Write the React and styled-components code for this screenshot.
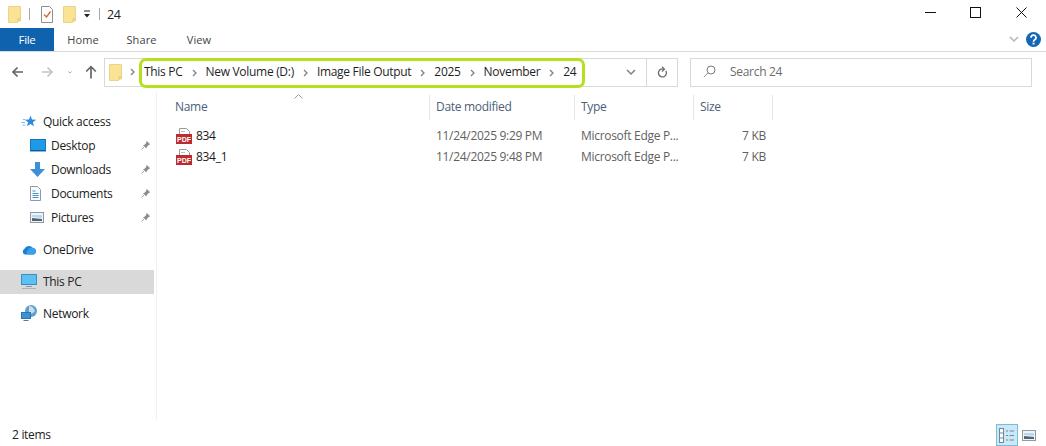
import React from 'react'
import styled, { createGlobalStyle } from 'styled-components'

const GlobalStyle = createGlobalStyle`
  html, body { margin: 0; padding: 0; background: #fff; }
  body {
    font-family: "Open Sans", "Noto Sans", "Liberation Sans", sans-serif;
    font-size: 12px;
    color: #1a1a1a;
    overflow: hidden;
  }
`

const Window = styled.div`
  width: 1046px;
  height: 446px;
  display: flex;
  flex-direction: column;
  letter-spacing: -0.3px;
`

const TitleBar = styled.div`
  height: 28px;
  display: flex;
  align-items: center;
  padding: 0 2px 0 8px;
`

const QuickTools = styled.div`
  display: flex;
  align-items: center;
  flex: 1;
`

const ToolSlot = styled.span`
  display: inline-flex;
  margin-left: ${(p) => p.$left || 0}px;
`

const TitleDivider = styled.span`
  width: 1px;
  height: 12px;
  background: #a8a8a8;
  margin-left: 8px;
`

const TitleText = styled.span`
  font-size: 12.5px;
  color: #222;
  margin-left: 7px;
`

const WinButton = styled.div`
  width: 45.5px;
  height: 24px;
  display: flex;
  align-items: center;
  justify-content: center;
  margin-top: -4px;
`

const Ribbon = styled.div`
  height: 24px;
  display: flex;
  align-items: stretch;
  border-bottom: 1px solid #dadada;
  box-sizing: border-box;
  padding-right: 4px;
`

const FileTab = styled.div`
  width: 54px;
  background: #0f62ad;
  color: #fff;
  display: flex;
  align-items: center;
  justify-content: center;
  font-size: 11.5px;
`

const RibbonTab = styled.div`
  width: ${(p) => p.$w}px;
  display: flex;
  align-items: center;
  justify-content: center;
  font-size: 11px;
  letter-spacing: 0.1px;
  color: #444;
`

const RibbonEnd = styled.div`
  margin-left: auto;
  display: flex;
  align-items: center;
  gap: 7px;
  padding-right: 1px;
`

const AddressRow = styled.div`
  height: 40px;
  display: flex;
  align-items: center;
  box-sizing: border-box;
  padding: 0 14px 0 8px;
`

const NavButton = styled.div`
  width: ${(p) => p.$w}px;
  margin-left: ${(p) => p.$left || 0}px;
  display: flex;
  justify-content: center;
  align-items: center;
`

const AddressBar = styled.div`
  position: relative;
  margin-left: 4px;
  width: 574px;
  height: 29px;
  box-sizing: border-box;
  border: 1px solid #d9d9d9;
  display: flex;
  align-items: center;
  padding-left: 4px;
  gap: 8px;
`

const Crumbs = styled.div`
  position: absolute;
  left: 34px;
  top: -1px;
  width: 446px;
  height: 30px;
  box-sizing: border-box;
  border: 3px solid #b4e01c;
  border-radius: 7px;
  display: flex;
  align-items: center;
  padding: 0 0 2px 2px;
  color: #1f1f1f;
  white-space: nowrap;
`

const CrumbArrow = styled.span`
  display: inline-flex;
  margin: 2px 9px 0;
`

const AddressEnd = styled.div`
  margin-left: auto;
  display: flex;
  align-items: stretch;
  height: 100%;
`

const AddressBtn = styled.div`
  width: ${(p) => p.$w}px;
  display: flex;
  align-items: center;
  justify-content: center;
  ${(p) => p.$divided && 'border-left: 1px solid #d9d9d9;'}
`

const SearchBox = styled.div`
  margin-left: 12px;
  width: 342px;
  height: 29px;
  box-sizing: border-box;
  border: 1px solid #d9d9d9;
  display: flex;
  align-items: center;
  padding: 0 0 2px 12px;
  gap: 14px;
  color: #6d6d6d;
`

const Body = styled.div`
  flex: 1;
  display: flex;
  min-height: 0;
`

const Sidebar = styled.nav`
  width: 157px;
  box-sizing: border-box;
  border-right: 1px solid #f0f0f0;
  padding-top: 18px;
  flex-shrink: 0;
`

const NavGroup = styled.div`
  margin-bottom: 8px;
`

const NavRow = styled.div`
  height: 24px;
  width: 154px;
  display: flex;
  align-items: center;
  box-sizing: border-box;
  padding-left: ${(p) => (p.$child ? 30 : 21)}px;
  padding-bottom: 2px;
  background: ${(p) => (p.$active ? '#d9d9d9' : 'transparent')};
  color: #222;
`

const NavIcon = styled.span`
  width: ${(p) => (p.$child ? 21 : 22)}px;
  display: inline-flex;
  align-items: center;
`

const PinWrap = styled.span`
  margin-left: auto;
  margin-right: 3px;
  display: inline-flex;
`

const Main = styled.main`
  flex: 1;
  min-width: 0;
`

const Columns = styled.div`
  display: grid;
  grid-template-columns: 272px 145px 119px 80px;
`

const HeaderRow = styled(Columns)`
  height: 25px;
  margin-top: 3px;
  margin-bottom: 5px;
`

const HeaderCell = styled.div`
  position: relative;
  display: flex;
  align-items: center;
  box-sizing: border-box;
  padding-left: ${(p) => (p.$first ? 18 : 6)}px;
  padding-bottom: 2px;
  color: #4c607a;
  ${(p) => !p.$first && 'border-left: 1px solid #e5e5e5;'}
  ${(p) => p.$last && 'border-right: 1px solid #e5e5e5;'}
`

const SortMark = styled.span`
  position: absolute;
  left: 137px;
  top: -1px;
  display: inline-flex;
`

const FileRow = styled(Columns)`
  height: 21px;
`

const FileCell = styled.div`
  display: flex;
  align-items: center;
  padding-left: ${(p) => (p.$first ? 19 : 7)}px;
  padding-right: ${(p) => (p.$right ? 7 : 0)}px;
  justify-content: ${(p) => (p.$right ? 'flex-end' : 'flex-start')};
  color: ${(p) => (p.$first ? '#1a1a1a' : '#5f5f5f')};
  gap: 4px;
`

const StatusBar = styled.footer`
  height: 26px;
  display: flex;
  align-items: center;
  padding: 0 10px 0 12px;
  justify-content: space-between;
  color: #222;
`

const StatusText = styled.span`
  margin-top: 2px;
`

const ViewToggles = styled.div`
  display: flex;
  align-items: center;
  gap: 4px;
`

const ViewButton = styled.div`
  width: ${(p) => (p.$active ? 22 : 14)}px;
  height: 22px;
  margin-top: 4px;
  box-sizing: border-box;
  display: flex;
  align-items: center;
  justify-content: center;
  ${(p) => p.$active && 'background: #cce8f6; border: 1px solid #79bcdb;'}
`

const PdfLabel = styled.text`
  font-family: "Liberation Sans", sans-serif;
  font-size: 7px;
  font-weight: 700;
  letter-spacing: 0;
  fill: #fff;
`

const Svg = ({ w, h, children }) => (
  <svg width={w} height={h} viewBox={`0 0 ${w} ${h}`} fill="none">{children}</svg>
)

const FolderIcon = () => (
  <Svg w={13} h={17}>
    <path d="M.5.5h12v14.500h-3v1.500H.5z" fill="#fbe396" stroke="#ecd38a" />
    <path d="M9.500 12v4.500L12.500 13V12z" fill="#eccf7a" />
  </Svg>
)

const NotesIcon = () => (
  <Svg w={12} h={17}>
    <path d="M.5.5h8l3 3v13H.5z" fill="#fff" stroke="#8f8f8f" />
    <path d="M3 8.500l2.500 2.500L9.500 5.500" stroke="#d9622b" strokeWidth="1.300" />
  </Svg>
)

const QuickDropIcon = () => (
  <Svg w={8} h={9}>
    <path d="M1 1h6" stroke="#222" />
    <path d="M1 4h6L4 7.500z" fill="#222" />
  </Svg>
)

const MinimizeIcon = () => (
  <Svg w={11} h={11}><path d="M0 5.500h11" stroke="#111" /></Svg>
)

const MaximizeIcon = () => (
  <Svg w={11} h={11}><rect x=".5" y=".5" width="10" height="10" stroke="#111" /></Svg>
)

const CloseIcon = () => (
  <Svg w={11} h={11}><path d="M.5.500l10 10M10.500.500l-10 10" stroke="#111" /></Svg>
)

const ChevronRight = () => (
  <Svg w={5} h={8}>
    <path d="M1 1l3 3-3 3" stroke="#808080" strokeWidth="1.300" />
  </Svg>
)

const ChevronDown = ({ c = '#808080' }) => (
  <Svg w={10} h={7}>
    <path d="M1 1l4 4 4-4" stroke={c} strokeWidth="1.500" />
  </Svg>
)

const SmallDown = () => (
  <Svg w={7} h={5}>
    <path d="M.7.700l2.800 2.800L6.300.700" stroke="#8a8a8a" strokeWidth="1.300" />
  </Svg>
)

const SortUp = () => (
  <Svg w={9} h={5}>
    <path d="M.5 4.500l4-4 4 4" stroke="#9a9a9a" />
  </Svg>
)

const ArrowBack = () => (
  <Svg w={13} h={12}>
    <path d="M12 6H2M6.500 1.500L2 6l4.500 4.500" stroke="#666" strokeWidth="1.700" />
  </Svg>
)

const ArrowForward = () => (
  <Svg w={13} h={12}>
    <path d="M1 6h10M6.500 1.500L11 6l-4.500 4.500" stroke="#c4c4c4" strokeWidth="1.700" />
  </Svg>
)

const ArrowUp = () => (
  <Svg w={12} h={14}>
    <path d="M6 13.500V2M1.200 6.500L6 1.700l4.800 4.800" stroke="#666" strokeWidth="1.700" />
  </Svg>
)

const RefreshIcon = () => (
  <Svg w={11} h={13}>
    <path d="M8.800 4.800A4 4 0 1 1 4 3.200h3" stroke="#6a6a6a" strokeWidth="1.300" />
    <path d="M5 .8L7.500 3.200 5 5.600" stroke="#6a6a6a" strokeWidth="1.200" />
  </Svg>
)

const SearchIcon = () => (
  <Svg w={13} h={13}>
    <circle cx="8" cy="5" r="4" stroke="#7a7a7a" />
    <path d="M5 8L.8 12.200" stroke="#9a9a9a" />
  </Svg>
)

const StarIcon = () => (
  <Svg w={16} h={12}>
    <path d="M9.500.5L11 4.500l4.200.15-3.300 2.650L13 11.350 9.500 9 6 11.350l1.100-4.050L3.800 4.650 8 4.500z" fill="#2d8ae0" />
    <path d="M2 4.500h2M.5 7.500h3.500M1.500 10h3" stroke="#7dbbec" />
  </Svg>
)

const DesktopIcon = () => (
  <Svg w={16} h={13}>
    <rect x=".5" y=".5" width="15" height="11.500" fill="#1e9be8" stroke="#1277c0" />
    <path d="M1 11h14v1H1z" fill="#0c5a94" />
  </Svg>
)

const DownloadIcon = () => (
  <Svg w={15} h={15}>
    <path d="M5 0h5v7h5l-7.500 8L0 7h5z" fill="#3f8fd9" />
  </Svg>
)

const DocumentIcon = () => (
  <Svg w={11} h={15}>
    <path d="M.5.5h7l3 3v11H.5z" fill="#f7fbff" stroke="#8a9aa8" />
    <path d="M2.500 5h3M2.500 7.500h6M2.500 9.500h6M2.500 11.500h6" stroke="#4a8fc0" />
  </Svg>
)

const PictureIcon = () => (
  <Svg w={14} h={11}>
    <rect x=".5" y=".5" width="13" height="10" fill="#eef4f9" stroke="#8f9aa3" />
    <path d="M2 3h10v3L2 5z" fill="#b9d7ee" />
    <path d="M2 6l10 1v2H2z" fill="#55636e" />
  </Svg>
)

const PinIcon = () => (
  <Svg w={10} h={10}>
    <path d="M5.500.8l3.700 3.500-1.500.6-2 2-.4 1.500L2 5.200l1.600-.5 1.700-2z" fill="#8c8c8c" />
    <path d="M3 7L.6 9.400" stroke="#a5a5a5" />
  </Svg>
)

const CloudIcon = () => (
  <Svg w={16} h={11}>
    <path d="M4 10.500A3 3 0 0 1 3.300 5 5 5 0 0 1 12 4a3.400 3.400 0 0 1 1 6.500z" fill="#1c7fd4" />
    <path d="M7 10.500a2.500 2.500 0 0 1 0-4.500 3.500 3.500 0 0 1 5-2 3.400 3.400 0 0 1 1 6.500z" fill="#3aa0ea" />
  </Svg>
)

const MonitorIcon = () => (
  <Svg w={16} h={15}>
    <rect x=".5" y=".5" width="15" height="10" fill="#5cc0f2" stroke="#3a8fc0" />
    <path d="M5 12.500h6" stroke="#7f9db0" />
    <path d="M1 14.500h14" stroke="#a5b5c0" />
  </Svg>
)

const NetworkIcon = () => (
  <Svg w={16} h={16}>
    <circle cx="10" cy="6" r="6" fill="#5d9fcf" />
    <path d="M8 .5c2.500.5 5 2.500 6 5.500-1.500 2-3.500 3-6 3z" fill="#c9dde9" />
    <rect x=".5" y="7.500" width="9" height="6" fill="#3d92d2" stroke="#2877b5" />
    <path d="M2.500 15.500h5" stroke="#5e7686" />
  </Svg>
)

const PdfIcon = () => (
  <Svg w={16} h={16}>
    <path d="M3.500.5h7l3 3v4h-10z" fill="#fff" stroke="#9a9a9a" />
    <path d="M5 3.500h4" stroke="#bdbdbd" />
    <rect y="6" width="16" height="10" fill="#bd2a2f" />
    <PdfLabel x="8" y="13.500" textAnchor="middle">PDF</PdfLabel>
  </Svg>
)

const HelpIcon = () => (
  <Svg w={15} h={15}>
    <circle cx="7.500" cy="7.500" r="7.500" fill="#1367b5" />
    <path d="M5 5.700a2.500 2.500 0 1 1 3.700 2.100c-.8.500-1.200.8-1.200 1.900" stroke="#fff" strokeWidth="1.700" />
    <rect x="6.600" y="10.600" width="1.900" height="1.900" fill="#fff" />
  </Svg>
)

const DetailsIcon = () => (
  <Svg w={16} h={15}>
    <rect x=".5" y=".5" width="4" height="14" fill="#fff" stroke="#6d8a9c" />
    <path d="M1 5h3M1 10h3" stroke="#6d8a9c" />
    <path d="M7 3h2M10.500 3H15M7 7.500h2M10.500 7.500H15M7 12h2M10.500 12H15" stroke="#6d8a9c" />
  </Svg>
)

const crumbs = ['This PC', 'New Volume (D:)', 'Image File Output', '2025', 'November', '24']

const quickAccess = [
  { label: 'Desktop', icon: <DesktopIcon /> },
  { label: 'Downloads', icon: <DownloadIcon /> },
  { label: 'Documents', icon: <DocumentIcon /> },
  { label: 'Pictures', icon: <PictureIcon /> },
]

const files = [
  { name: '834', date: '11/24/2025 9:29 PM' },
  { name: '834_1', date: '11/24/2025 9:48 PM' },
]

export default function App() {
  return (
    <>
      <GlobalStyle />
      <Window>
        <TitleBar>
          <QuickTools>
            <FolderIcon />
            <TitleDivider />
            <ToolSlot $left={11}><NotesIcon /></ToolSlot>
            <ToolSlot $left={10}><FolderIcon /></ToolSlot>
            <ToolSlot $left={7}><QuickDropIcon /></ToolSlot>
            <TitleDivider />
            <TitleText>24</TitleText>
          </QuickTools>
          <WinButton><MinimizeIcon /></WinButton>
          <WinButton><MaximizeIcon /></WinButton>
          <WinButton><CloseIcon /></WinButton>
        </TitleBar>

        <Ribbon>
          <FileTab>File</FileTab>
          <RibbonTab $w={58}>Home</RibbonTab>
          <RibbonTab $w={59}>Share</RibbonTab>
          <RibbonTab $w={56}>View</RibbonTab>
          <RibbonEnd>
            <ChevronDown c="#b5b5b5" />
            <HelpIcon />
          </RibbonEnd>
        </Ribbon>

        <AddressRow>
          <NavButton $w={18}><ArrowBack /></NavButton>
          <NavButton $w={42}><ArrowForward /></NavButton>
          <NavButton $w={4}><SmallDown /></NavButton>
          <NavButton $w={18} $left={10}><ArrowUp /></NavButton>
          <AddressBar>
            <FolderIcon />
            <ChevronRight />
            <Crumbs>
              {crumbs.map((crumb, i) => (
                <React.Fragment key={crumb}>
                  {i > 0 && <CrumbArrow><ChevronRight /></CrumbArrow>}
                  <span>{crumb}</span>
                </React.Fragment>
              ))}
            </Crumbs>
            <AddressEnd>
              <AddressBtn $w={30}><ChevronDown /></AddressBtn>
              <AddressBtn $w={30} $divided><RefreshIcon /></AddressBtn>
            </AddressEnd>
          </AddressBar>
          <SearchBox>
            <SearchIcon />
            <span>Search 24</span>
          </SearchBox>
        </AddressRow>

        <Body>
          <Sidebar>
            <NavGroup>
              <NavRow>
                <NavIcon><StarIcon /></NavIcon>
                Quick access
              </NavRow>
              {quickAccess.map((item) => (
                <NavRow $child key={item.label}>
                  <NavIcon $child>{item.icon}</NavIcon>
                  {item.label}
                  <PinWrap><PinIcon /></PinWrap>
                </NavRow>
              ))}
            </NavGroup>
            <NavGroup>
              <NavRow>
                <NavIcon><CloudIcon /></NavIcon>
                OneDrive
              </NavRow>
            </NavGroup>
            <NavGroup>
              <NavRow $active>
                <NavIcon><MonitorIcon /></NavIcon>
                This PC
              </NavRow>
            </NavGroup>
            <NavGroup>
              <NavRow>
                <NavIcon><NetworkIcon /></NavIcon>
                Network
              </NavRow>
            </NavGroup>
          </Sidebar>

          <Main>
            <HeaderRow>
              <HeaderCell $first>
                Name
                <SortMark><SortUp /></SortMark>
              </HeaderCell>
              <HeaderCell>Date modified</HeaderCell>
              <HeaderCell>Type</HeaderCell>
              <HeaderCell $last>Size</HeaderCell>
            </HeaderRow>
            {files.map((file) => (
              <FileRow key={file.name}>
                <FileCell $first><PdfIcon />{file.name}</FileCell>
                <FileCell>{file.date}</FileCell>
                <FileCell>Microsoft Edge P...</FileCell>
                <FileCell $right>7 KB</FileCell>
              </FileRow>
            ))}
          </Main>
        </Body>

        <StatusBar>
          <StatusText>2 items</StatusText>
          <ViewToggles>
            <ViewButton $active><DetailsIcon /></ViewButton>
            <ViewButton><PictureIcon /></ViewButton>
          </ViewToggles>
        </StatusBar>
      </Window>
    </>
  )
}
